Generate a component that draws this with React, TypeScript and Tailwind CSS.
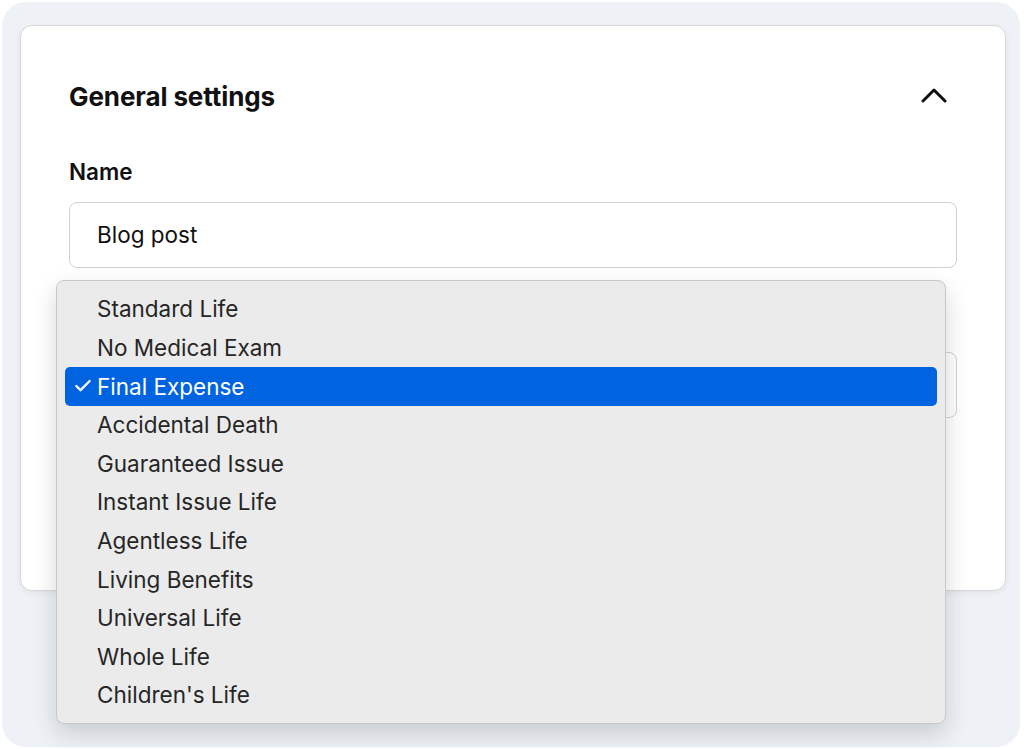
import { Check } from 'lucide-react'

const OPTIONS = [
  'Standard Life',
  'No Medical Exam',
  'Final Expense',
  'Accidental Death',
  'Guaranteed Issue',
  'Instant Issue Life',
  'Agentless Life',
  'Living Benefits',
  'Universal Life',
  'Whole Life',
  "Children's Life",
]

const SELECTED = 'Final Expense'

export default function App() {
  return (
    <div className="h-[749px] w-[1024px] bg-white p-[2px] font-['Inter','Liberation_Sans',sans-serif]">
      <div className="h-[745px] w-[1018px] rounded-[24px] bg-[#eef2f6] pl-[18px] pt-[23px]">
        <div className="relative h-[566px] w-[986px] rounded-[12px] border border-[#d6d9dc] bg-white px-[48px] pt-[52px] shadow-[0_2px_6px_rgba(0,0,0,0.06)]">
          <div className="flex h-[36px] items-center justify-between">
            <h2 className="text-[26px] font-bold tracking-[-0.1px] text-[#111]">General settings</h2>
            <svg
              width="26"
              height="18"
              viewBox="0 0 26 18"
              fill="none"
              stroke="#111"
              strokeWidth="3"
              strokeLinecap="round"
              strokeLinejoin="round"
              className="mb-[2px] mr-[10px]"
            >
              <path d="M2 15 L13 4 L24 15" />
            </svg>
          </div>

          <label className="mt-[44px] block text-[22.5px] font-semibold leading-[28px] text-[#111]">Name</label>
          <div className="mt-[16px] flex h-[66px] items-center rounded-[8px] border border-[#cfd2d5] px-[27px] text-[22.5px] text-[#111]">
            Blog post
          </div>

          {/* second field (its label and value sit under the open menu) */}
          <div className="mt-[36px] h-[28px]" />
          <div className="mt-[20px] h-[66px] rounded-[8px] border border-[#cfd2d5]" />

          {/* open native-style select menu */}
          <div className="absolute left-[35px] top-[254px] z-10 w-[890px] rounded-[8px] border border-[#c8c8c8] bg-[#ebebeb] px-[8px] pb-[8px] pt-[9px] shadow-[0_10px_24px_rgba(0,0,0,0.16)]">
            {OPTIONS.map(opt => {
              const active = opt === SELECTED
              return (
                <div
                  key={opt}
                  className={`relative flex h-[38.6px] items-center rounded-[5px] pl-[32px] text-[22.5px] ${
                    active ? 'bg-[#0064e1] text-white' : 'text-[#262626]'
                  }`}
                >
                  {active && (
                    <Check className="absolute left-[8px] top-[9px] h-[20px] w-[20px]" strokeWidth={2.75} />
                  )}
                  {opt}
                </div>
              )
            })}
          </div>
        </div>
      </div>
    </div>
  )
}
